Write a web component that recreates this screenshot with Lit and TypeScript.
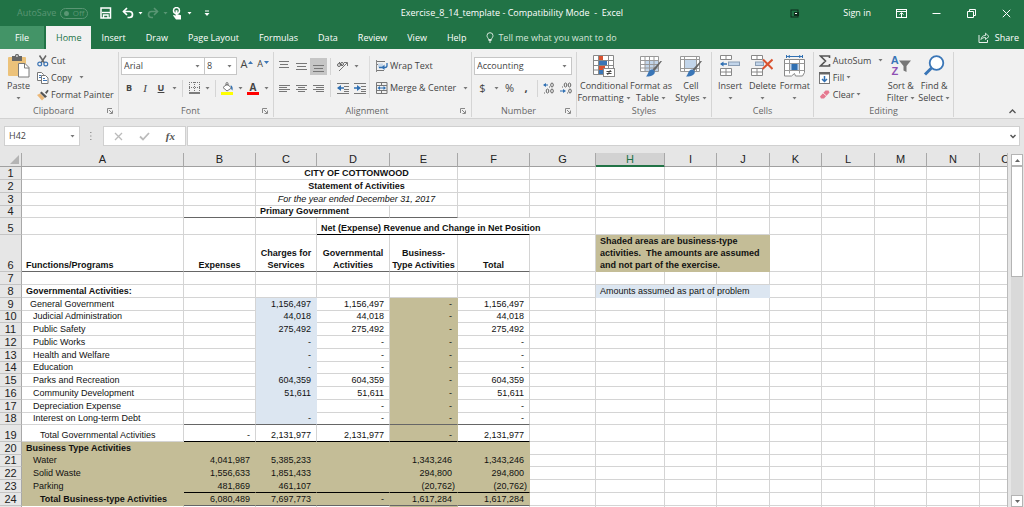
import { LitElement, html, css, svg, nothing } from "lit";
import { customElement, property, state } from "lit/decorators.js";
import { classMap } from "lit/directives/class-map.js";
import { styleMap } from "lit/directives/style-map.js";

const icon = (w: number, h: number, body: unknown) =>
  html`<svg class="ico" width=${w} height=${h} viewBox="0 0 ${w} ${h}" fill="none" aria-hidden="true">${body}</svg>`;

const caret = html`<svg class="ico caret" width="5" height="3" viewBox="0 0 5 3" aria-hidden="true"><path d="M0.5 0h4L2.5 2.5z" fill="currentColor" /></svg>`;

const lines = (spec: number[][]) =>
  svg`${spec.map(([x, y, w]) => svg`<rect x=${x} y=${y} width=${w} height="1" fill="#777" />`)}`;

const icons = {
  save: icon(12, 12, svg`<path d="M1 1h9.5v10H1z" stroke="#fff" stroke-width="1.5"/><path d="M2 5.5h8" stroke="#fff" stroke-width="1.4"/><path d="M3.5 11V8h4.5v3" stroke="#fff" stroke-width="1.4"/>`),
  undo: icon(12, 12, svg`<path d="M1.5 4.5h6a3 3 0 0 1 0 6H5.5" stroke="#fff" stroke-width="1.7"/><path d="M5 1L1.5 4.5 5 8" stroke="#fff" stroke-width="1.7"/>`),
  redo: icon(12, 12, svg`<path d="M10.5 4.5h-6a3 3 0 0 0 0 6H6" stroke="#5a9674" stroke-width="1.6"/><path d="M7 1l3.5 3.5L7 8" stroke="#5a9674" stroke-width="1.6"/>`),
  touch: icon(11, 13, svg`<circle cx="4.500" cy="3.600" r="3" stroke="#fff" stroke-width="1.500"/><path d="M3.500 3.200h2v4l3.500 1v4.300H4L1 8.500l1-.8L3.500 9z" fill="#fff"/>`),
  custom: icon(6, 7, svg`<path d="M1 1h4" stroke="#fff"/><path d="M0.5 3h5L3 6z" fill="#fff"/>`),
  badge: icon(10, 9, svg`<rect x="1" y="1" width="7" height="7" stroke="#0d2b1a"/><rect x="4" y="3" width="5" height="4" fill="#0d2b1a"/><rect x="5" y="4" width="2" height="1" fill="#fff"/>`),
  display: icon(11, 9, svg`<rect x=".5" y=".5" width="10" height="8" stroke="#fff"/><path d="M1 2.500h9" stroke="#fff"/><path d="M5.500 8V4M3.500 5.500l2-1.800 2 1.800" stroke="#fff"/>`),
  min: icon(9, 9, svg`<path d="M0.500 4.500h8" stroke="#fff"/>`),
  restore: icon(9, 9, svg`<path d="M.5 2.500h6v6h-6z" stroke="#fff"/><path d="M2.500 2V.5h6v6H7" stroke="#fff"/>`),
  close: icon(9, 9, svg`<path d="M.8.8l7.400 7.400M8.200.8L.8 8.200" stroke="#fff"/>`),
  bulb: icon(8, 11, svg`<path d="M2.500 7.500C2.500 6 1 5.500 1 3.700a3 3 0 0 1 6 0C7 5.500 5.500 6 5.500 7.500z" stroke="#d6e6dc"/><path d="M2.500 8.500h3M3 10h2" stroke="#d6e6dc"/>`),
  share: icon(12, 11, svg`<path d="M1 3v7.500h8.500V8" stroke="#e8f1ec"/><path d="M3 7.500C3.500 4.500 5 3.500 7.500 3.500V1.200L11 4.500 7.500 7.500V5.500C5.500 5.500 4 6 3 7.500z" stroke="#e8f1ec" stroke-width=".9"/>`),
  paste: icon(23, 24, svg`<rect x="1" y="3" width="18" height="19" rx="1" fill="#ecc27a"/><rect x="5" y="2" width="10" height="5" fill="#666"/><rect x="8" y="0" width="4" height="4" rx="1.500" fill="#666"/><rect x="9.200" y="1.300" width="1.500" height="1.500" fill="#f1f1f1"/><path d="M11.500 9.500h6.500l4 4v9.500H11.500z" fill="#fff" stroke="#7a7a7a"/><path d="M17.500 9.500v4.500h4.500" stroke="#7a7a7a"/>`),
  cut: icon(12, 12, svg`<path d="M2.500.5l5 7.500M9 .5L4 8" stroke="#666" stroke-width="1.500"/><circle cx="2.700" cy="9" r="1.900" stroke="#3c74b4" stroke-width="1.200"/><circle cx="8.800" cy="9" r="1.900" stroke="#3c74b4" stroke-width="1.200"/>`),
  copy: icon(12, 12, svg`<path d="M.5.5h4l2 2v6h-6z" fill="#fff" stroke="#777"/><path d="M4.500 3.500h4l2.500 2.500v5.500H4.500z" fill="#fff" stroke="#777"/><path d="M6 6.500h2M6 8.500h4M2 3.500h2M2 5.500h2" stroke="#3c74b4"/>`),
  brush: icon(12, 12, svg`<path d="M8 3.500l2.500-2.800 1.200 1L9.500 5z" fill="#555"/><path d="M4.500 2.500L10 7.500 8 9 3 4z" fill="#555"/><path d="M3 4.500L7.500 9 5 11.500 0 6z" fill="#ecb877"/>`),
  launch: icon(6, 6, svg`<path d="M.5 5V.5H5M2 2l3 3M5.500 2.500v3h-3" stroke="#888"/>`),
  grid: icon(11, 12, svg`<path d="M.5 0v10M5.500 0v10M10.500 0v10M0 .5h11M0 5.500h11" stroke="#777" stroke-dasharray="1 1"/><path d="M0 11h11" stroke="#555" stroke-width="1.500"/>`),
  fill: icon(13, 13, svg`<path d="M2 5.500L6 2l4.500 4L6 9z" fill="#fff" stroke="#777"/><path d="M5 4V1.500a1 1 0 0 1 2 0V4" stroke="#777"/><path d="M9.500 3.500c2 0 2.500 2 2 5-1-.5-1.500-2-1.500-3.500z" fill="#2f6fb2"/><rect x="0" y="10" width="12" height="3" fill="#ffff00"/>`),
  top: icon(11, 12, lines([[0, 1, 10], [1, 4, 8], [0, 7, 10]])),
  mid: icon(11, 12, lines([[0, 3, 11], [1, 6, 9], [0, 9, 11]])),
  bot: icon(11, 12, lines([[0, 5, 11], [1, 8, 9], [0, 11, 11]])),
  left: icon(11, 9, lines([[0, 1, 11], [0, 3, 8], [0, 5, 11], [0, 7, 8]])),
  center: icon(11, 9, lines([[0, 1, 11], [2, 3, 7], [0, 5, 11], [2, 7, 7]])),
  right: icon(11, 9, lines([[0, 1, 11], [3, 3, 8], [0, 5, 11], [3, 7, 8]])),
  outdent: icon(12, 11, svg`${lines([[0, 0, 12], [7, 3, 5], [7, 6, 5], [0, 10, 12], [7, 8, 5]])}<path d="M1 5h6" stroke="#2f6fb2" stroke-width="1.500"/><path d="M4 2L0 5l4 3z" fill="#2f6fb2"/>`),
  indent: icon(12, 11, svg`${lines([[0, 0, 12], [7, 3, 5], [7, 6, 5], [0, 10, 12], [7, 8, 5]])}<path d="M0 5h5" stroke="#2f6fb2" stroke-width="1.500"/><path d="M3 2l4 3-4 3z" fill="#2f6fb2"/>`),
  orient: icon(13, 12, svg`<path d="M3 11L11 3M8 2.500h3.500V6" stroke="#777"/><circle cx="3" cy="5" r="1.500" stroke="#666"/><circle cx="6" cy="4" r="1.500" stroke="#666"/><path d="M3 2l4 4" stroke="#666"/>`),
  wrap: icon(12, 12, svg`<path d="M.5 0v12" stroke="#888"/><path d="M1 1.500h8M1 4.500h5M1 10.500h7" stroke="#777"/><rect x="2" y="3.500" width="5" height="4" fill="#c7d8ea"/><path d="M3 7.500h6a2 2 0 0 0 2-2V3" stroke="#2f6fb2" stroke-width="1.300"/><path d="M8.500 4.500L5.500 7.500l3 2.500z" fill="#2f6fb2"/>`),
  merge: icon(12, 12, svg`<path d="M.5.5h10.500v11H.5zM.5 3.500h10.500M.5 8.500h10.500M5.500.5v3M5.500 8.500v3" stroke="#777"/><path d="M3 6h5.500" stroke="#2f6fb2"/><path d="M4 4L1.500 6 4 8zM7.500 4L10 6 7.500 8z" fill="#2f6fb2"/>`),
  cond: icon(23, 23, svg`<rect x=".5" y=".5" width="20" height="19" fill="#fff"/><path d="M.5.5h20v19H.5zM5.500.5v19M15.500.5v19M.5 5.500h20M.5 10.500h20M.5 15h20" stroke="#888"/><rect x="6" y="1" width="4" height="4" fill="#d9522f"/><rect x="6" y="6" width="8" height="4" fill="#3a76b7"/><rect x="6" y="11" width="6" height="4" fill="#d9522f"/><rect x="6" y="15" width="4" height="4" fill="#3a76b7"/><rect x="10.500" y="13.500" width="11" height="8" fill="#fff" stroke="#888"/><path d="M13.500 16.500h5M13.500 18.500h5M17.500 15l-3 5" stroke="#444"/>`),
  table: icon(23, 23, svg`<rect x=".5" y="1.500" width="18" height="15" fill="#fff"/><rect x="5" y="5" width="13" height="11" fill="#c2d5ea"/><path d="M.5 1.500h18v15H.5zM5 1.500v15M9.500 1.500v15M14 1.500v15M.5 5.500h18M.5 9.500h18M.5 13h18" stroke="#999"/><path d="M22 6l-7.500 10-2-1.500L20.500 6z" fill="#666"/><path d="M11.500 14.500c2.500 0 4 2 3 4-1.500 2.500-5 3-8.500 3 2-1.500 2-6 5.500-7z" fill="#3a76b7"/>`),
  style: icon(23, 23, svg`<rect x=".5" y="1.500" width="19" height="15" fill="#fff"/><rect x="5" y="5" width="11" height="8" fill="#c2d5ea"/><path d="M.5 1.500h19v15H.5zM4.500 1.500v15M16.500 1.500v15M.5 4.500h19M.5 13.500h19" stroke="#999"/><path d="M22 6l-7.500 10-2-1.500L20.500 6z" fill="#666"/><path d="M11.500 14.500c2.500 0 4 2 3 4-1.500 2.500-5 3-8.500 3 2-1.500 2-6 5.500-7z" fill="#3a76b7"/>`),
  insert: icon(22, 22, svg`<path d="M1.500.5h11v4h-11zM7 .5v4M1.500 13.500h11v7h-11zM7 13.500v7M1.500 17h11" fill="#fff" stroke="#888"/><rect x="9.500" y="7" width="11" height="3.500" fill="#c2d5ea" stroke="#8a9db3"/><path d="M2 9h6" stroke="#2f6fb2" stroke-width="1.500"/><path d="M4.500 6.500L1 9l3.500 2.500z" fill="#2f6fb2"/>`),
  del: icon(22, 22, svg`<path d="M.5.500h11v4H.5zM6 .5v4M.5 13.500h11v7H.5zM6 13.500v7M.5 17h11" fill="#fff" stroke="#888"/><rect x="4.500" y="7" width="8" height="3.500" fill="#c2d5ea" stroke="#8a9db3"/><path d="M12 4.500l9.500 9.500M21.500 4.500L11.500 14" stroke="#d9522f" stroke-width="2"/>`),
  format: icon(22, 22, svg`<path d="M2.500 0v3M18.500 0v3M3 1.500h15" stroke="#2f6fb2"/><path d="M6 0L3 1.500 6 3zM15 0l3 1.500L15 3z" fill="#2f6fb2"/><path d="M.5 4.500h20v13l-2 3.500h-7l-1-2.500-3 2.500H.5z" fill="#fff" stroke="#888"/><path d="M5.500 4.500v14M15.500 4.500v14M.5 8.500h20M.5 15.500h20" stroke="#999"/><rect x="6" y="9" width="9" height="6" fill="#c2d5ea"/><rect x="7.500" y="9" width="6" height="6" fill="#2f6fb2"/>`),
  sum: icon(12, 12, svg`<path d="M10.500 3V1H1.500l5 5-5 5h9V9" stroke="#555" stroke-width="1.600"/>`),
  down: icon(12, 12, svg`<rect x=".5" y=".5" width="10" height="11" fill="#fff" stroke="#777"/><rect x="0" y="0" width="11" height="2.500" fill="#666"/><path d="M5.500 4v5M3 7l2.500 2.500L8 7" stroke="#2f6fb2" stroke-width="1.500"/>`),
  erase: icon(12, 12, svg`<path d="M6.500 1.500h3l1 2L5 9.500H2L1 7.500z" fill="#e5788f"/><path d="M4 4l3.500 3" stroke="#fff" stroke-width=".8"/>`),
  funnel: icon(12, 13, svg`<path d="M0 .5h12L7.500 6v6l-3-1.500V6z" fill="#777"/>`),
  find: icon(22, 22, svg`<circle cx="13.500" cy="8" r="6.800" fill="#fff" stroke="#3a76b7" stroke-width="1.800"/><path d="M8.500 13L2 19.500" stroke="#3a76b7" stroke-width="3"/>`),
  dec1: icon(12, 12, svg`<path d="M1 3h4" stroke="#2f6fb2"/><path d="M3 1L0 3l3 2z" fill="#2f6fb2"/><ellipse cx="9" cy="3" rx="1.300" ry="2" stroke="#666"/><path d="M6 5h1M1 11h1" stroke="#666"/><ellipse cx="4.500" cy="9" rx="1.300" ry="2" stroke="#666"/><ellipse cx="9" cy="9" rx="1.300" ry="2" stroke="#666"/>`),
  dec2: icon(12, 12, svg`<path d="M0 9h4" stroke="#2f6fb2"/><path d="M3 7l3 2-3 2z" fill="#2f6fb2"/><ellipse cx="5.500" cy="3" rx="1.300" ry="2" stroke="#666"/><path d="M2 5h1M7 11h1" stroke="#666"/><ellipse cx="9.500" cy="3" rx="1.300" ry="2" stroke="#666"/><ellipse cx="10" cy="9" rx="1.300" ry="2" stroke="#666"/>`),
  collapse: icon(7, 5, svg`<path d="M.5 4L3.500 1l3 3" stroke="#555" stroke-width="1.300"/>`),
  cancel: icon(9, 9, svg`<path d="M1 1l7 7M8 1L1 8" stroke="#bbb" stroke-width="1.300"/>`),
  accept: icon(11, 9, svg`<path d="M1 4.500L4 7.500 10 1" stroke="#bbb" stroke-width="1.800"/>`),
  expand: icon(6, 5, svg`<path d="M.5 1L3 3.500 5.500 1" stroke="#555" stroke-width="1.500"/>`),
  dots: icon(2, 9, svg`<path d="M0 .5h1.500M0 4h1.500M0 7.500h1.500" stroke="#999"/>`),
  up: icon(5, 3, svg`<path d="M0 3h5L2.500 0z" fill="currentColor"/>`),
  dn: icon(5, 3, svg`<path d="M0 0h5L2.500 3z" fill="currentColor"/>`),
  corner: icon(9, 9, svg`<path d="M9 0v9H0z" fill="#b4b4b4"/>`),
};

const uiBase = css`
  :host { display: block; font: 9px/12px "Open Sans", "Noto Sans", sans-serif; color: #444; }
  *, *::before { box-sizing: border-box; }
  button, select, input {
    font: inherit; color: inherit; background: none; border: 0; border-radius: 0;
    margin: 0; padding: 0; appearance: none; outline: 0; white-space: nowrap;
  }
  .ico { display: block; flex: none; }
`;

@customElement("title-bar")
class TitleBar extends LitElement {
  static styles = [uiBase, css`
    :host { background: #217346; color: #fff; }
    .bar { display: grid; grid-template-columns: 1fr auto 1fr; align-items: center; height: 26px; }
    .quick { display: flex; align-items: center; padding-left: 17px; }
    .auto { display: flex; align-items: center; gap: 4px; color: #5a9674; margin-right: 12px; }
    .toggle { display: flex; align-items: center; gap: 4px; width: 28px; height: 11px; line-height: 8px; border: 1px solid #5a9674; border-radius: 6px; padding: 0 3px; font-size: 8px; }
    .toggle::before { content: ""; width: 5px; height: 5px; border-radius: 50%; background: #5a9674; }
    .quick > button { height: 20px; display: flex; align-items: center; }
    .more { width: 13px; justify-content: center; }
    .wide { width: 22px; }
    .last { margin-left: 4px; }
    .dim { color: #5a9674; }
    .name { white-space: pre; }
    .right { display: flex; justify-content: flex-end; align-items: center; }
    .badge { margin-right: 43px; }
    .sign { margin-right: 13px; }
    .win { width: 35px; height: 24px; display: flex; align-items: center; justify-content: center; }
  `];
  render() {
    return html`<div class="bar">
      <div class="quick">
        <div class="auto">AutoSave<button class="toggle" role="switch" aria-checked="false">Off</button></div>
        <button class="wide" aria-label="Save">${icons.save}</button>
        <button aria-label="Undo">${icons.undo}</button>
        <button class="more" aria-label="Undo list">${caret}</button>
        <button aria-label="Redo">${icons.redo}</button>
        <button class="more dim" aria-label="Redo list">${caret}</button>
        <button aria-label="Touch mode">${icons.touch}</button>
        <button class="more" aria-label="Mode list">${caret}</button>
        <button class="more last" aria-label="Customize toolbar">${icons.custom}</button>
      </div>
      <div class="name">Exercise_8_14_template - Compatibility Mode  -  Excel</div>
      <div class="right">
        <span class="badge">${icons.badge}</span>
        <button class="sign">Sign in</button>
        <button class="win" aria-label="Ribbon display">${icons.display}</button>
        <button class="win" aria-label="Minimize">${icons.min}</button>
        <button class="win" aria-label="Restore">${icons.restore}</button>
        <button class="win" aria-label="Close">${icons.close}</button>
      </div>
    </div>`;
  }
}

@customElement("tab-strip")
class TabStrip extends LitElement {
  @state() active = "Home";
  static styles = [uiBase, css`
    :host { background: #217346; color: #fff; }
    nav { display: flex; height: 23px; align-items: stretch; }
    .tab { padding: 0 10px; }
    .file { background: #439467; width: 44px; margin-right: 2px; }
    .on { background: #f1f1f1; color: #217346; }
    .tell { display: flex; align-items: center; gap: 4px; margin-left: 10px; color: #d6e6dc; }
    .share { display: flex; align-items: center; gap: 5px; margin-left: auto; margin-right: 5px; }
  `];
  render() {
    return html`<nav>
      <button class="tab file">File</button>
      ${["Home", "Insert", "Draw", "Page Layout", "Formulas", "Data", "Review", "View", "Help"].map(
        (t) => html`<button class=${classMap({ tab: true, on: t === this.active })} @click=${() => (this.active = t)}>${t}</button>`
      )}
      <button class="tell">${icons.bulb}Tell me what you want to do</button>
      <button class="share">${icons.share}Share</button>
    </nav>`;
  }
}

@customElement("ribbon-group")
class RibbonGroup extends LitElement {
  @property() label = "";
  @property({ type: Boolean }) launcher = false;
  static styles = [uiBase, css`
    :host { display: flex; flex-direction: column; border-right: 1px solid #d5d5d5; margin-top: 3px; height: 65px; }
    .body { flex: 1; display: flex; }
    .foot { display: flex; align-items: center; text-align: center; height: 12px; color: #666; }
    .name { flex: 1; }
    .foot button { width: 11px; }
  `];
  render() {
    return html`<div class="body"><slot></slot></div>
      <div class="foot"><span class="name">${this.label}</span>${this.launcher
        ? html`<button aria-label="${this.label} settings">${icons.launch}</button>` : nothing}</div>`;
  }
}

@customElement("excel-ribbon")
class ExcelRibbon extends LitElement {
  static styles = [uiBase, css`
    :host { background: #f1f1f1; border-bottom: 1px solid #d2d2d2; }
    .ribbon { display: flex; height: 69px; }
    .caret { color: #777; }
    .g-clip { width: 119px; } .g-font { width: 155px; } .g-align { width: 198px; } .g-num { width: 105px; }
    .g-style { width: 135px; } .g-cell { width: 102px; } .g-edit { width: 140px; }
    .stack { display: flex; flex-direction: column; }
    .item { display: flex; align-items: center; gap: 2px; height: 17px; }
    .item .caret { margin-left: 5px; }
    .near .caret { margin-left: 0; }
    .big { display: flex; flex-direction: column; align-items: center; padding-top: 2px; line-height: 12px; color: #444; }
    .pic { height: 24px; display: flex; align-items: center; margin-bottom: 2px; }
    .lbl { display: flex; align-items: center; justify-content: center; gap: 2px; height: 12px; }
    .paste { width: 37px; }
    .tools { display: flex; flex-direction: column; gap: 4px; padding: 5px 0 0 2px; }
    .row { display: flex; height: 18px; align-items: center; }
    .b { width: 16px; height: 17px; display: flex; align-items: center; justify-content: center; }
    .w { width: 17px; }
    .a { width: 10px; height: 17px; display: flex; align-items: center; justify-content: center; }
    .on { background: #c6c6c6; }
    .sep { width: 1px; height: 17px; background: #d5d5d5; margin: 0 3px; }
    .vsep { width: 1px; background: #dcdcdc; height: 42px; margin: 4px 4px 0 1px; }
    .bold { font-weight: 700; } .ital { font-style: italic; font-family: "Liberation Serif", serif; font-size: 11px; } .und { text-decoration: underline; }
    .pick { display: flex; align-items: center; height: 18px; border: 1px solid #c6c6c6; background: #fff; }
    .pick + .pick { border-left: 0; }
    .pick select { flex: 1; height: 16px; padding-left: 2px; width: 100%; }
    .pick .caret { margin-right: 4px; }
    .face { width: 84px; } .size { width: 32px; margin-right: 2px; } .num { width: 98px; }
    .grow { font-size: 11px; align-items: flex-start; gap: 1px; } .shrink { font-size: 9px; }
    .mark { color: #3a76b7; margin-top: 3px; }
    .ink { flex-direction: column; line-height: 10px; font-weight: 700; font-size: 10px; }
    .ink::after { content: ""; width: 12px; height: 3px; background: #f00; }
    .sym { font-size: 11px; }
    .bigs { display: flex; justify-content: space-around; flex: 1; padding: 0 2px; }
    .edit { padding-left: 4px; }
    .cw { width: 48px; } .tw { width: 42px; } .sw { width: 34px; } .iw { width: 32px; }
    .az { display: flex; flex-direction: column; font: 700 11px/11px "Liberation Sans", sans-serif; color: #3a76b7; }
    .z { color: #8f4fb3; }
    .rest { flex: 1; display: flex; justify-content: flex-end; align-items: flex-end; padding: 0 8px 4px; }
  `];

  big(cls: string, pic: unknown, l1: string, l2: string) {
    return html`<button class="big ${cls}"><span class="pic">${pic}</span><span class="lbl">${l1}</span><span class="lbl">${l2}${caret}</span></button>`;
  }

  render() {
    return html`<div class="ribbon">
      <ribbon-group class="g-clip" label="Clipboard" launcher>
        ${this.big("paste", icons.paste, "Paste", "")}
        <div class="stack">
          <button class="item">${icons.cut}Cut</button>
          <button class="item">${icons.copy}Copy${caret}</button>
          <button class="item">${icons.brush}Format Painter</button>
        </div>
      </ribbon-group>
      <ribbon-group class="g-font" label="Font" launcher>
        <div class="tools">
          <div class="row">
            <label class="pick face"><select aria-label="Font"><option>Arial</option></select>${caret}</label>
            <label class="pick size"><select aria-label="Font size"><option>8</option></select>${caret}</label>
            <button class="b grow" aria-label="Increase font size">A<span class="mark">${icons.up}</span></button>
            <button class="b grow shrink" aria-label="Decrease font size">A<span class="mark">${icons.dn}</span></button>
          </div>
          <div class="row">
            <button class="b bold">B</button><button class="b ital">I</button><button class="b bold und">U</button>
            <button class="a" aria-label="Underline styles">${caret}</button><span class="sep"></span>
            <button class="b" aria-label="Borders">${icons.grid}</button><button class="a" aria-label="Border styles">${caret}</button>
            <span class="sep"></span>
            <button class="b" aria-label="Fill color">${icons.fill}</button><button class="a" aria-label="Fill colors">${caret}</button>
            <button class="b ink" aria-label="Font color">A</button><button class="a" aria-label="Font colors">${caret}</button>
          </div>
        </div>
      </ribbon-group>
      <ribbon-group class="g-align" label="Alignment" launcher>
        <div class="tools">
          <div class="row">
            <button class="b w" aria-label="Top align">${icons.top}</button>
            <button class="b w" aria-label="Middle align">${icons.mid}</button>
            <button class="b w on" aria-label="Bottom align">${icons.bot}</button><span class="sep"></span>
            <button class="b w" aria-label="Orientation">${icons.orient}</button>
            <button class="a" aria-label="Orientation list">${caret}</button>
          </div>
          <div class="row">
            <button class="b w" aria-label="Align left">${icons.left}</button>
            <button class="b w" aria-label="Center">${icons.center}</button>
            <button class="b w" aria-label="Align right">${icons.right}</button><span class="sep"></span>
            <button class="b w" aria-label="Decrease indent">${icons.outdent}</button>
            <button class="b w" aria-label="Increase indent">${icons.indent}</button>
          </div>
        </div>
        <span class="vsep"></span>
        <div class="tools">
          <button class="row item">${icons.wrap}Wrap Text</button>
          <button class="row item">${icons.merge}Merge &amp; Center${caret}</button>
        </div>
      </ribbon-group>
      <ribbon-group class="g-num" label="Number" launcher>
        <div class="tools">
          <div class="row"><label class="pick num"><select aria-label="Number format"><option>Accounting</option></select>${caret}</label></div>
          <div class="row">
            <button class="b sym w">$</button><button class="a" aria-label="Currencies">${caret}</button>
            <button class="b sym w">%</button><button class="b bold sym">,</button><span class="sep"></span>
            <button class="b" aria-label="Increase decimal">${icons.dec1}</button>
            <button class="b w" aria-label="Decrease decimal">${icons.dec2}</button>
          </div>
        </div>
      </ribbon-group>
      <ribbon-group class="g-style" label="Styles">
        <div class="bigs">
          ${this.big("cw", icons.cond, "Conditional", "Formatting")}
          ${this.big("tw", icons.table, "Format as", "Table")}
          ${this.big("sw", icons.style, "Cell", "Styles")}
        </div>
      </ribbon-group>
      <ribbon-group class="g-cell" label="Cells">
        <div class="bigs">
          ${this.big("iw", icons.insert, "Insert", "")}
          ${this.big("iw", icons.del, "Delete", "")}
          ${this.big("iw", icons.format, "Format", "")}
        </div>
      </ribbon-group>
      <ribbon-group class="g-edit" label="Editing">
        <div class="bigs edit">
          <div class="stack">
            <button class="item">${icons.sum}AutoSum${caret}</button>
            <button class="item near">${icons.down}Fill${caret}</button>
            <button class="item near">${icons.erase}Clear${caret}</button>
          </div>
          ${this.big("iw", html`<span class="az"><span>A</span><span class="z">Z</span></span>${icons.funnel}`, "Sort &", "Filter")}
          ${this.big("iw", icons.find, "Find &", "Select")}
        </div>
      </ribbon-group>
      <div class="rest"><button aria-label="Collapse ribbon">${icons.collapse}</button></div>
    </div>`;
  }
}

@customElement("formula-bar")
class FormulaBar extends LitElement {
  static styles = [uiBase, css`
    :host { background: #e6e6e6; }
    .bar { display: flex; align-items: center; height: 34px; padding: 0 4px; }
    .box { display: flex; align-items: center; height: 20px; background: #fff; border: 1px solid #d0d0d0; }
    .caret { color: #777; }
    .ref { width: 76px; padding: 0 4px; }
    .ref input { width: 60px; flex: 1; }
    .dots { margin: 0 11px 0 10px; }
    .acts { width: 83px; justify-content: space-around; margin-right: 1px; padding: 0 2px; }
    .fx { font: italic 700 11px/12px "Liberation Serif", serif; color: #555; }
    .formula { flex: 1; padding-right: 3px; }
    .formula input { flex: 1; }
  `];
  render() {
    return html`<div class="bar">
      <div class="box ref"><input aria-label="Name box" .value=${"H42"} />${caret}</div>
      <span class="dots">${icons.dots}</span>
      <div class="box acts">
        <button aria-label="Cancel">${icons.cancel}</button><button aria-label="Enter">${icons.accept}</button><button class="fx">fx</button>
      </div>
      <div class="box formula"><input aria-label="Formula" /><button aria-label="Expand formula bar">${icons.expand}</button></div>
    </div>`;
  }
}

interface Cell { t?: string | string[]; span?: number; c?: string; }
interface Row { h: number; cells?: Record<string, Cell>; }

const HEAD = 22;
const COLS: [string, number][] = [
  ["A", 162], ["B", 72], ["C", 61], ["D", 73], ["E", 68], ["F", 72], ["G", 66], ["H", 69], ["I", 52], ["J", 53],
  ...["K", "L", "M", "N", "O", "P", "Q", "R", "S", "T", "U", "V", "W", "X", "Y", "Z"].map(
    (n, i): [string, number] => [n, i % 2 ? 53 : 52]),
];

const fill = (fills: Record<string, string>, cells: Record<string, Cell>) => {
  for (const [keys, cls] of Object.entries(fills))
    for (const k of keys) cells[k] = { ...cells[k], c: `${cells[k]?.c ?? ""} ${cls}` };
  return cells;
};
const n = (t: string): Cell => ({ t, c: t.startsWith("(") ? "num neg" : "num" });
const line = (name: string, c: string, d: string, e: string, f: string, cls = "in2") => {
  const cells: Record<string, Cell> = { A: { t: name, c: cls }, C: n(c), D: n(d), E: n(e), F: n(f) };
  return fill({ C: "blue", E: "tan" }, cells);
};
const biz = (name: string, v: string[], extra: Record<string, string> = {}, cls = "in2") =>
  fill({ ABCDEF: "tan", ...extra }, { A: { t: name, c: cls }, B: n(v[0]), C: n(v[1]), D: n(v[2]), E: n(v[3]), F: n(v[4]) });

const ROWS: Row[] = [
  { h: 13, cells: { C: { t: "CITY OF COTTONWOOD", span: 3, c: "mid bold" } } },
  { h: 13, cells: { C: { t: "Statement of Activities", span: 3, c: "mid bold" } } },
  { h: 13, cells: { C: { t: "For the year ended December 31, 2017", span: 3, c: "mid ital" } } },
  { h: 12, cells: { B: { c: "gray" }, C: { t: "Primary Government", span: 2, c: "bold gray in0" }, E: { c: "gray" } } },
  { h: 17, cells: { D: { t: "Net (Expense) Revenue and Change in Net Position", span: 3, c: "bold black in0 bare" } } },
  { h: 37, cells: {
    A: { t: "Functions/Programs", c: "bold in0 gray" }, B: { t: "Expenses", c: "bold mid gray" },
    C: { t: ["Charges for", "Services"], c: "bold mid gray" }, D: { t: ["Governmental", "Activities"], c: "bold mid gray" },
    E: { t: ["Business-", "Type Activities"], c: "bold mid gray" }, F: { t: "Total", c: "bold mid gray" },
    H: { t: ["Shaded areas are business-type", "activities.  The amounts are assumed", "and not part of the exercise."], span: 3, c: "bold tan in0" } } },
  { h: 13 },
  { h: 13, cells: { A: { t: "Governmental Activities:", c: "bold in0" }, H: { t: "Amounts assumed as part of problem", span: 3, c: "blue in0" } } },
  { h: 13, cells: line("General Government", "1,156,497", "1,156,497", "-", "1,156,497", "in1") },
  { h: 12, cells: line("Judicial Administration", "44,018", "44,018", "-", "44,018") },
  { h: 13, cells: line("Public Safety", "275,492", "275,492", "-", "275,492") },
  { h: 13, cells: line("Public Works", "-", "-", "-", "-") },
  { h: 13, cells: line("Health and Welfare", "-", "-", "-", "-") },
  { h: 12, cells: line("Education", "-", "-", "-", "-") },
  { h: 13, cells: line("Parks and Recreation", "604,359", "604,359", "-", "604,359") },
  { h: 13, cells: line("Community Development", "51,611", "51,611", "-", "51,611") },
  { h: 13, cells: line("Depreciation Expense", "", "-", "-", "-") },
  { h: 12, cells: fill({ BCDEF: "gray" }, line("Interest on Long-term Debt", "-", "-", "-", "-")) },
  { h: 17, cells: fill({ E: "tan", BCDEF: "black" }, {
    A: { t: "Total Governmental Activities", c: "in3" }, B: n("-"), C: n("2,131,977"), D: n("2,131,977"), E: n("-"), F: n("2,131,977") }) },
  { h: 13, cells: biz("Business Type Activities", ["", "", "", "", ""], {}, "bold in0") },
  { h: 12, cells: biz("Water", ["4,041,987", "5,385,233", "", "1,343,246", "1,343,246"]) },
  { h: 13, cells: biz("Solid Waste", ["1,556,633", "1,851,433", "", "294,800", "294,800"]) },
  { h: 13, cells: biz("Parking", ["481,869", "461,107", "", "(20,762)", "(20,762)"], { BCDEF: "black" }) },
  { h: 13, cells: biz("Total Business-type Activities", ["6,080,489", "7,697,773", "-", "1,617,284", "1,617,284"], { BCDEF: "gray" }, "bold in3") },
  { h: 13, cells: { E: { c: "tan" } } },
  ...Array.from({ length: 60 }, () => ({ h: 13 })),
];

/** Counts how many tracks are needed to cover the given length. */
const cover = (sizes: number[], length: number) => {
  let used = 0;
  let count = 0;
  while (count < sizes.length && used < length) used += sizes[count++];
  return count;
};

@customElement("sheet-grid")
class SheetGrid extends LitElement {
  @state() viewWidth = 0;
  @state() viewHeight = 0;
  private watcher = new ResizeObserver(([entry]) => {
    this.viewWidth = entry.contentRect.width - 16;
    this.viewHeight = entry.contentRect.height;
  });

  static styles = [uiBase, css`
    :host { display: flex; min-height: 0; overflow: hidden; background: #e6e6e6; }
    .view { flex: 1; min-width: 0; overflow: hidden; border-right: 1px solid #bbb; }
    table { table-layout: fixed; width: 1px; border-collapse: separate; border-spacing: 0; font: 9px/11px "Liberation Sans", Arial, sans-serif; color: #111; background: #fff; }
    .heads { width: 22px; }
    th { font-weight: 400; font-size: 11px; padding: 0; background: #e6e6e6; border-right: 1px solid #a8a8a8; border-bottom: 1px solid #c4c4c4; color: #222; vertical-align: bottom; }
    thead th { height: 14px; line-height: 13px; border-bottom-color: #a0a0a0; }
    thead .sel { background: #d2d2d2; color: #217346; border-bottom-color: #217346; box-shadow: inset 0 -1px #217346; }
    .corner { padding: 0 2px 2px 10px; }
    td { padding: 0; border-right: 1px solid #d4d4d4; border-bottom: 1px solid #d4d4d4; vertical-align: bottom; white-space: pre; }
    .tall { line-height: 12px; }
    .mid { text-align: center; } .num { text-align: right; padding-right: 5px; } .neg { padding-right: 2px; }
    .bold { font-weight: 700; } .ital { font-style: italic; }
    .in0 { padding-left: 4px; } .in1 { padding-left: 8px; } .in2 { padding-left: 11px; } .in3 { padding-left: 18px; }
    .tan { background: #c4bd97; border-color: #c4bd97; } .blue { background: #dce6f1; border-color: #dce6f1; }
    .gray { border-bottom-color: #666; } .black { border-bottom-color: #000; } .bare { border-right-color: transparent; }
    .scroll { width: 16px; display: flex; flex-direction: column; align-items: stretch; padding: 1px 1px 0 3px; color: #666; }
    .arrow { height: 12px; background: #fff; border: 1px solid #b4b4b4; display: flex; align-items: center; justify-content: center; }
    .thumb { height: 111px; background: #fff; border: 1px solid #b4b4b4; }
    .track { flex: 1; background: #d9d9d9; }
  `];

  connectedCallback() {
    super.connectedCallback();
    this.watcher.observe(this);
  }

  disconnectedCallback() {
    this.watcher.disconnect();
    super.disconnectedCallback();
  }

  cells(row: Row, cols: [string, number][]) {
    const out: unknown[] = [];
    for (let i = 0; i < cols.length; ) {
      const cell = row.cells?.[cols[i][0]] ?? {};
      const span = cell.span ?? 1;
      const text = Array.isArray(cell.t) ? cell.t.join("\n") : cell.t ?? "";
      out.push(html`<td class="${cell.c ?? ""} ${Array.isArray(cell.t) ? "tall" : ""}" colspan=${span}>${text}</td>`);
      i += span;
    }
    return out;
  }

  render() {
    const cols = COLS.slice(0, cover(COLS.map(([, w]) => w), this.viewWidth - HEAD));
    const rows = ROWS.slice(0, cover(ROWS.map((r) => r.h), this.viewHeight - 14));
    return html`<div class="view"><table>
        <colgroup><col class="heads" />${cols.map(([, w]) => html`<col style=${styleMap({ width: `${w}px` })} />`)}</colgroup>
        <thead><tr><th class="corner">${icons.corner}</th>${cols.map(([c]) => html`<th scope="col" class=${c === "H" ? "sel" : ""}>${c}</th>`)}</tr></thead>
        <tbody>${rows.map((r, i) => html`<tr style=${styleMap({ height: `${r.h}px` })}><th scope="row">${i + 1}</th>${this.cells(r, cols)}</tr>`)}</tbody>
      </table></div>
      <div class="scroll">
        <button class="arrow" aria-label="Scroll up">${icons.up}</button>
        <div class="thumb"></div><div class="track"></div>
        <button class="arrow" aria-label="Scroll down">${icons.dn}</button>
      </div>`;
  }
}

@customElement("app-root")
class AppRoot extends LitElement {
  static styles = css`
    :host { display: flex; flex-direction: column; height: 100vh; overflow: hidden; background: #e6e6e6; }
    sheet-grid { flex: 1; }
  `;
  render() {
    return html`<title-bar></title-bar><tab-strip></tab-strip><excel-ribbon></excel-ribbon><formula-bar></formula-bar><sheet-grid></sheet-grid>`;
  }
}
